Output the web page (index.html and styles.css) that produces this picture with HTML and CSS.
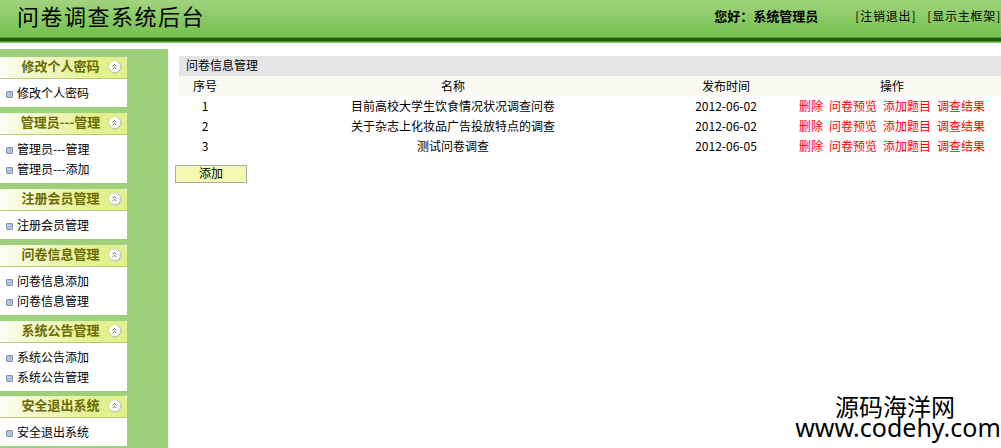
FILE: index.html
```html
<!DOCTYPE html>
<html lang="zh-CN">
<head>
  <meta charset="UTF-8" />
  <title>问卷调查系统后台</title>
  <link rel="stylesheet" href="styles.css">
</head>
<body>

  <svg width="0" height="0" class="defs">
    <symbol id="fold" viewBox="0 0 14 14">
      <circle cx="7" cy="7" r="6.5" fill="#c4c4b4"/>
      <circle cx="6.6" cy="6.6" r="5.6" fill="#fff"/>
      <path d="M4.6 6.4 L6.6 4.4 L8.6 6.4 M4.6 9.2 L6.6 7.2 L8.6 9.2" fill="none" stroke="#666" stroke-width="1"/>
    </symbol>
  </svg>

  <div class="header">
    <h1>问卷调查系统后台</h1>
    <div class="welcome">您好：系统管理员</div>
    <a class="toplink" href="#">[注销退出]</a>
    <a class="toplink" href="#">[显示主框架]</a>
  </div>

  <div class="content">
    <div class="sidebar">
      <div class="box">
        <div class="box-title">修改个人密码<svg class="fold"><use href="#fold"/></svg></div>
        <ul>
          <li><a href="#">修改个人密码</a></li>
        </ul>
      </div>
      <div class="box">
        <div class="box-title">管理员---管理<svg class="fold"><use href="#fold"/></svg></div>
        <ul>
          <li><a href="#">管理员---管理</a></li>
          <li><a href="#">管理员---添加</a></li>
        </ul>
      </div>
      <div class="box">
        <div class="box-title">注册会员管理<svg class="fold"><use href="#fold"/></svg></div>
        <ul>
          <li><a href="#">注册会员管理</a></li>
        </ul>
      </div>
      <div class="box">
        <div class="box-title">问卷信息管理<svg class="fold"><use href="#fold"/></svg></div>
        <ul>
          <li><a href="#">问卷信息添加</a></li>
          <li><a href="#">问卷信息管理</a></li>
        </ul>
      </div>
      <div class="box box-tight">
        <div class="box-title">系统公告管理<svg class="fold"><use href="#fold"/></svg></div>
        <ul>
          <li><a href="#">系统公告添加</a></li>
          <li><a href="#">系统公告管理</a></li>
        </ul>
      </div>
      <div class="box">
        <div class="box-title">安全退出系统<svg class="fold"><use href="#fold"/></svg></div>
        <ul>
          <li><a href="#">安全退出系统</a></li>
        </ul>
      </div>
    </div>

    <div class="main">
      <div class="panel">
        <div class="panel-title">问卷信息管理</div>
        <table>
          <tr class="head">
            <td class="col-no">序号</td>
            <td class="col-name">名称</td>
            <td class="col-date">发布时间</td>
            <td class="col-ops">操作</td>
          </tr>
          <tr>
            <td>1</td>
            <td>目前高校大学生饮食情况状况调查问卷</td>
            <td>2012-06-02</td>
            <td class="col-ops"><a href="#">删除</a><a href="#">问卷预览</a><a href="#">添加题目</a><a href="#">调查结果</a></td>
          </tr>
          <tr>
            <td>2</td>
            <td>关于杂志上化妆品广告投放特点的调查</td>
            <td>2012-06-02</td>
            <td class="col-ops"><a href="#">删除</a><a href="#">问卷预览</a><a href="#">添加题目</a><a href="#">调查结果</a></td>
          </tr>
          <tr>
            <td>3</td>
            <td>测试问卷调查</td>
            <td>2012-06-05</td>
            <td class="col-ops"><a href="#">删除</a><a href="#">问卷预览</a><a href="#">添加题目</a><a href="#">调查结果</a></td>
          </tr>
        </table>
      </div>
      <button class="add" type="button">添加</button>
    </div>
  </div>

  <div class="watermark">
    <div class="wm-name">源码海洋网</div>
    <div class="wm-url">www.codehy.com</div>
  </div>

</body>
</html>
```

FILE: styles.css
```css
* {
  box-sizing: border-box;
}
html, body {
  height: 100%;
}
body {
  margin: 0;
  font-family: "Noto Sans CJK SC", "Liberation Sans", sans-serif;
  font-size: 12px;
  color: #000;
  background: #fff;
  display: flex;
  flex-direction: column;
  overflow: hidden;
}
a {
  color: inherit;
  text-decoration: none;
}
.defs {
  display: block;
  height: 0;
}

/* top bar */
.header {
  height: 43px;
  flex-shrink: 0;
  display: flex;
  align-items: center;
  padding: 0 0 13px 17px;
  background: linear-gradient(#a1d47e, #74c04e 36px, #8fd060 37px, #1f5a10 38px, #1f5a10 41px, #8ccf5e 42px);
}
.header h1 {
  margin: 0;
  font-size: 22px;
  font-weight: normal;
  letter-spacing: 1.5px;
  flex-grow: 1;
}
.welcome {
  font-size: 13px;
  font-weight: bold;
  width: 141px;
}
.toplink {
  letter-spacing: 0.8px;
}
.toplink + .toplink {
  margin-left: 11px;
}

.content {
  flex-grow: 1;
  display: flex;
  margin-top: 6px;
  min-height: 0;
}

/* left menu */
.sidebar {
  width: 168px;
  flex-shrink: 0;
  padding-top: 8px;
  background: #9cd07a;
}
.box {
  width: 127px;
  margin-bottom: 6px;
  background: #fff;
}
.box-tight {
  margin-bottom: 5px;
}
.box-title {
  position: relative;
  height: 22px;
  line-height: 18px;
  padding-right: 6px;
  text-align: center;
  border-bottom: 1px solid #b4d070;
  border-top-right-radius: 4px;
  background: linear-gradient(to right, #fcfdf2, #e2f18e 75%);
  font-weight: bold;
  font-size: 13px;
  color: #6b6b00;
}
.fold {
  position: absolute;
  right: 5px;
  top: 3px;
  width: 14px;
  height: 14px;
}
.box ul {
  margin: 0;
  padding: 5px 0 3px;
  list-style: none;
}
.box li {
  position: relative;
  height: 20px;
  line-height: 18px;
  padding-left: 17px;
}
.box li::before {
  content: "";
  position: absolute;
  left: 6px;
  top: 7px;
  width: 5px;
  height: 5px;
  border-radius: 1px;
  background: #a9c1ec;
  border: 1px solid #8c98a8;
}

/* right side */
.main {
  flex-grow: 1;
  padding: 7px 0 0 7px;
}
.panel {
  margin-left: 4px;
}
.panel-title {
  height: 20px;
  line-height: 18px;
  padding-left: 7px;
  background: #e5e5e5;
}
table {
  width: 100%;
  border-collapse: collapse;
  table-layout: fixed;
}
td {
  height: 20px;
  padding: 0 0 2px;
  text-align: center;
}
.head td {
  background: #f9f9f1;
}
.col-no {
  width: 52px;
}
.col-name {
  width: 444px;
}
.col-date {
  width: 102px;
}
.col-ops {
  padding-left: 6px;
  color: #f00;
}
.head .col-ops {
  color: #000;
}
.col-ops a + a {
  margin-left: 6px;
}
.add {
  display: block;
  width: 72px;
  height: 18px;
  margin-top: 9px;
  padding: 0 0 4px;
  font: inherit;
  line-height: 14px;
  background: #f4f8b0;
  border: 1px solid #aaa;
}

/* site mark over the page corner */
.watermark {
  position: absolute;
  right: 0;
  bottom: 8px;
  width: 206px;
  text-align: center;
  line-height: 1;
}
.wm-name {
  font-size: 24px;
  padding-right: 6px;
  margin-bottom: -3px;
}
.wm-url {
  font-family: "Noto Sans", sans-serif;
  font-size: 25px;
}
```
